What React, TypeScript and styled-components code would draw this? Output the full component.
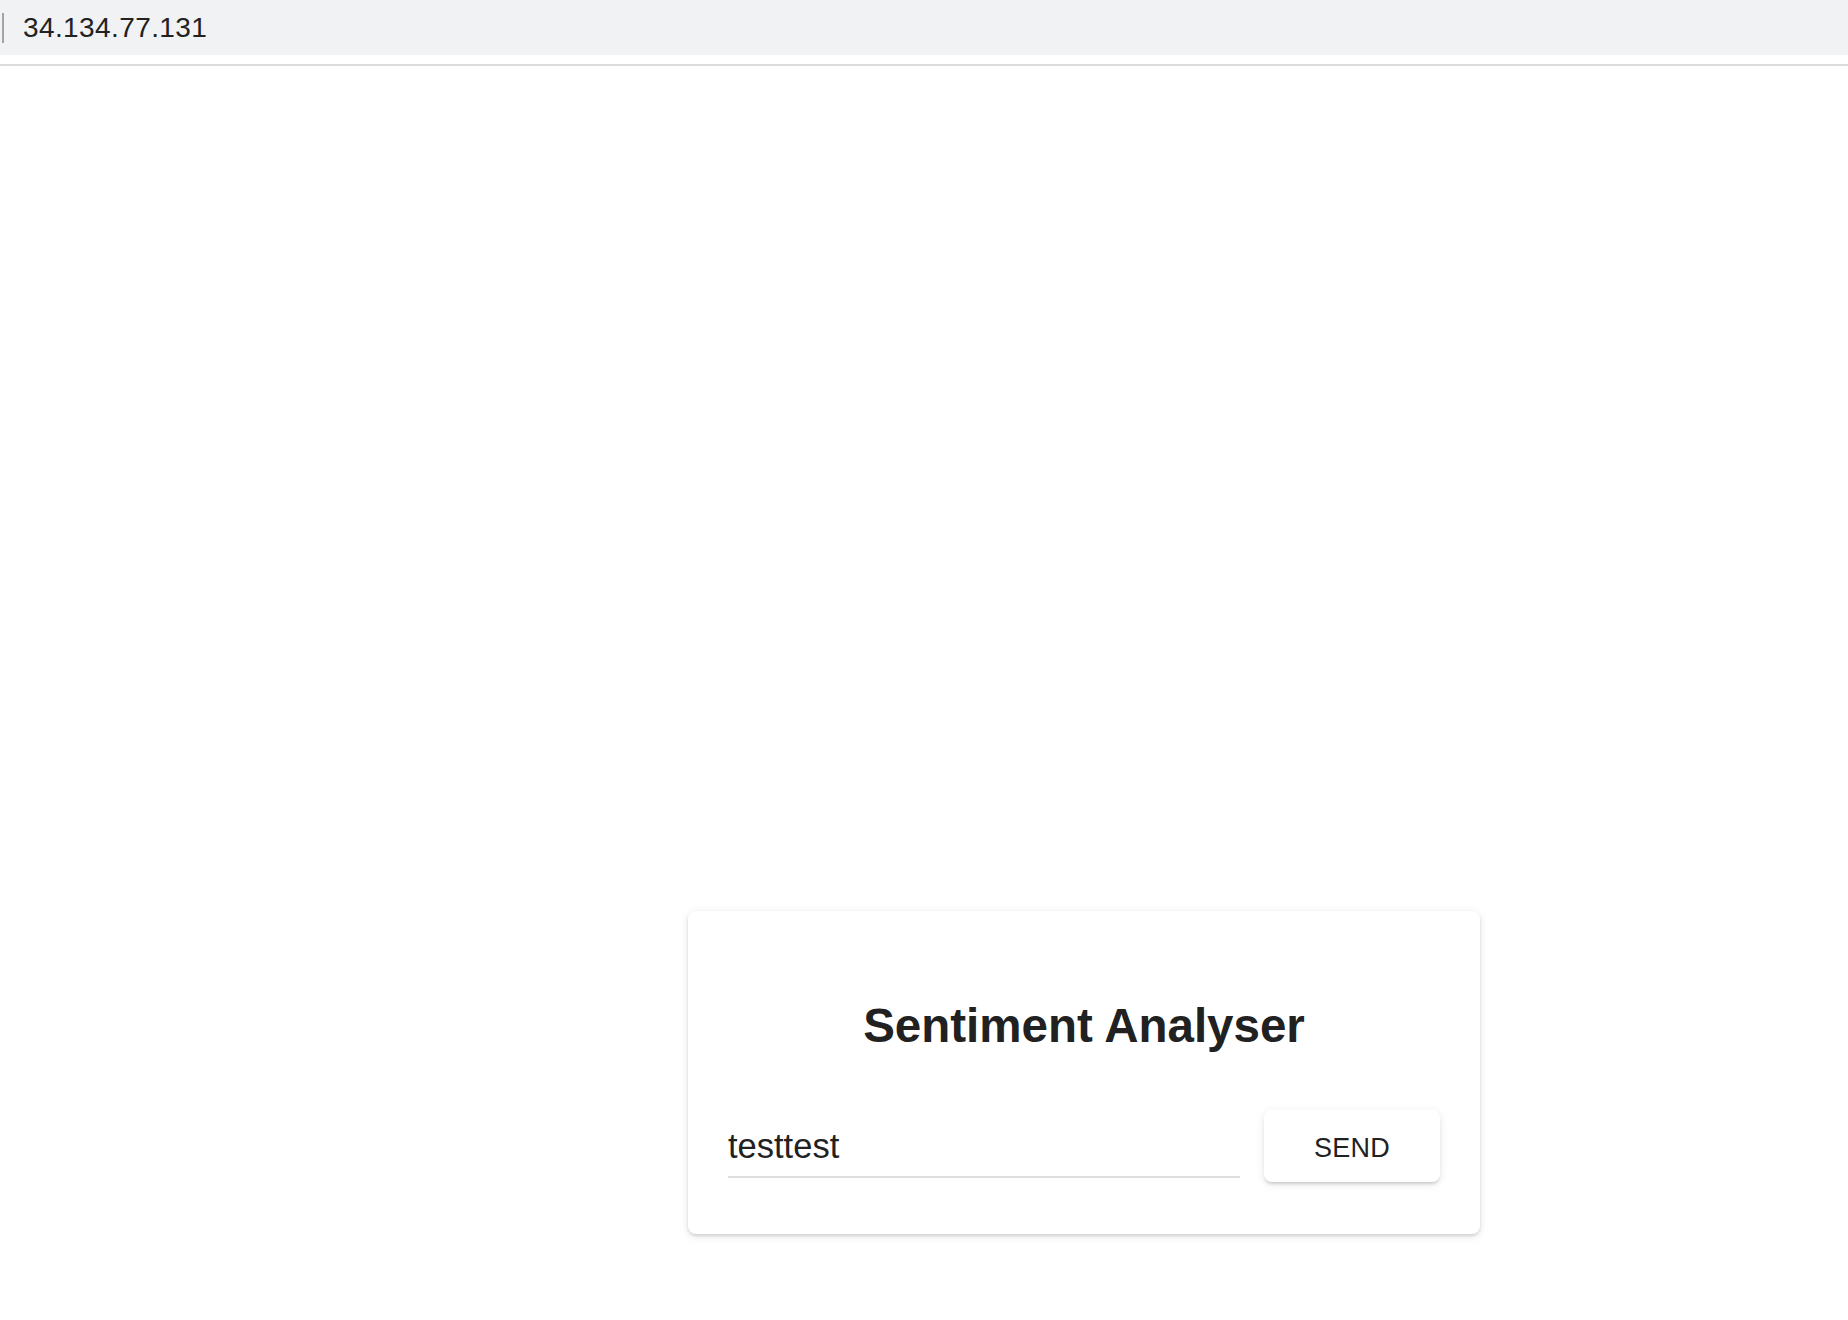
import React from 'react'
import styled, { createGlobalStyle } from 'styled-components'

const GlobalStyle = createGlobalStyle`
  html, body {
    margin: 0;
    padding: 0;
    background: #fff;
    font-family: 'Liberation Sans', Arial, sans-serif;
    color: #212121;
  }
`

const Page = styled.div`
  min-height: 1320px;
  display: flex;
  flex-direction: column;
`

const AddressBar = styled.div`
  height: 55px;
  background: #f1f2f4;
  display: flex;
  align-items: center;
  padding-left: 2px;
  box-sizing: border-box;
`

const Caret = styled.span`
  width: 2px;
  height: 30px;
  background: #a4a4a4;
  margin-right: 19px;
`

const AddressText = styled.span`
  font-size: 28px;
  color: #222;
  letter-spacing: 0.4px;
`

const Divider = styled.div`
  height: 2px;
  margin-top: 9px;
  background: #dcdcdc;
`

const Main = styled.main`
  flex: 1;
  display: flex;
  justify-content: center;
  padding: 845px 0 0 0;
`

const Card = styled.section`
  width: 792px;
  margin-left: 320px;
  box-sizing: border-box;
  padding: 82px 40px 52px;
  background: #fff;
  border-radius: 8px;
  box-shadow: 0 2px 3px rgba(0, 0, 0, 0.12), 0 2px 10px rgba(0, 0, 0, 0.1);
  display: flex;
  flex-direction: column;
  align-items: stretch;
  align-self: flex-start;
`

const Title = styled.h2`
  margin: 0;
  font-size: 47.5px;
  line-height: 66px;
  font-weight: 700;
  text-align: center;
  color: #212121;
`

const FormRow = styled.form`
  margin-top: 51px;
  display: flex;
  align-items: flex-end;
  gap: 24px;
`

const Field = styled.input`
  flex: 1;
  min-width: 0;
  height: 58px;
  margin-bottom: 4px;
  padding: 0 0 4px;
  box-sizing: border-box;
  border: none;
  border-bottom: 2px solid #dedede;
  outline: none;
  background: transparent;
  font-family: 'Liberation Sans', Arial, sans-serif;
  font-size: 34.5px;
  color: #212121;
`

const SendButton = styled.button`
  width: 176px;
  height: 72px;
  padding: 4px 0 0;
  border: none;
  border-radius: 8px;
  background: #fff;
  box-shadow: 0 3px 3px -1px rgba(0, 0, 0, 0.14), 0 2px 8px rgba(0, 0, 0, 0.1);
  font-family: 'Liberation Sans', Arial, sans-serif;
  font-size: 27px;
  color: #212121;
  letter-spacing: 0.3px;
  cursor: pointer;
`

const App: React.FC = () => {
  return (
    <Page>
      <GlobalStyle />
      <AddressBar>
        <Caret />
        <AddressText>34.134.77.131</AddressText>
      </AddressBar>
      <Divider />
      <Main>
        <Card>
          <Title>Sentiment Analyser</Title>
          <FormRow onSubmit={(e) => e.preventDefault()}>
            <Field defaultValue="testtest" />
            <SendButton type="submit">SEND</SendButton>
          </FormRow>
        </Card>
      </Main>
    </Page>
  )
}

export default App
